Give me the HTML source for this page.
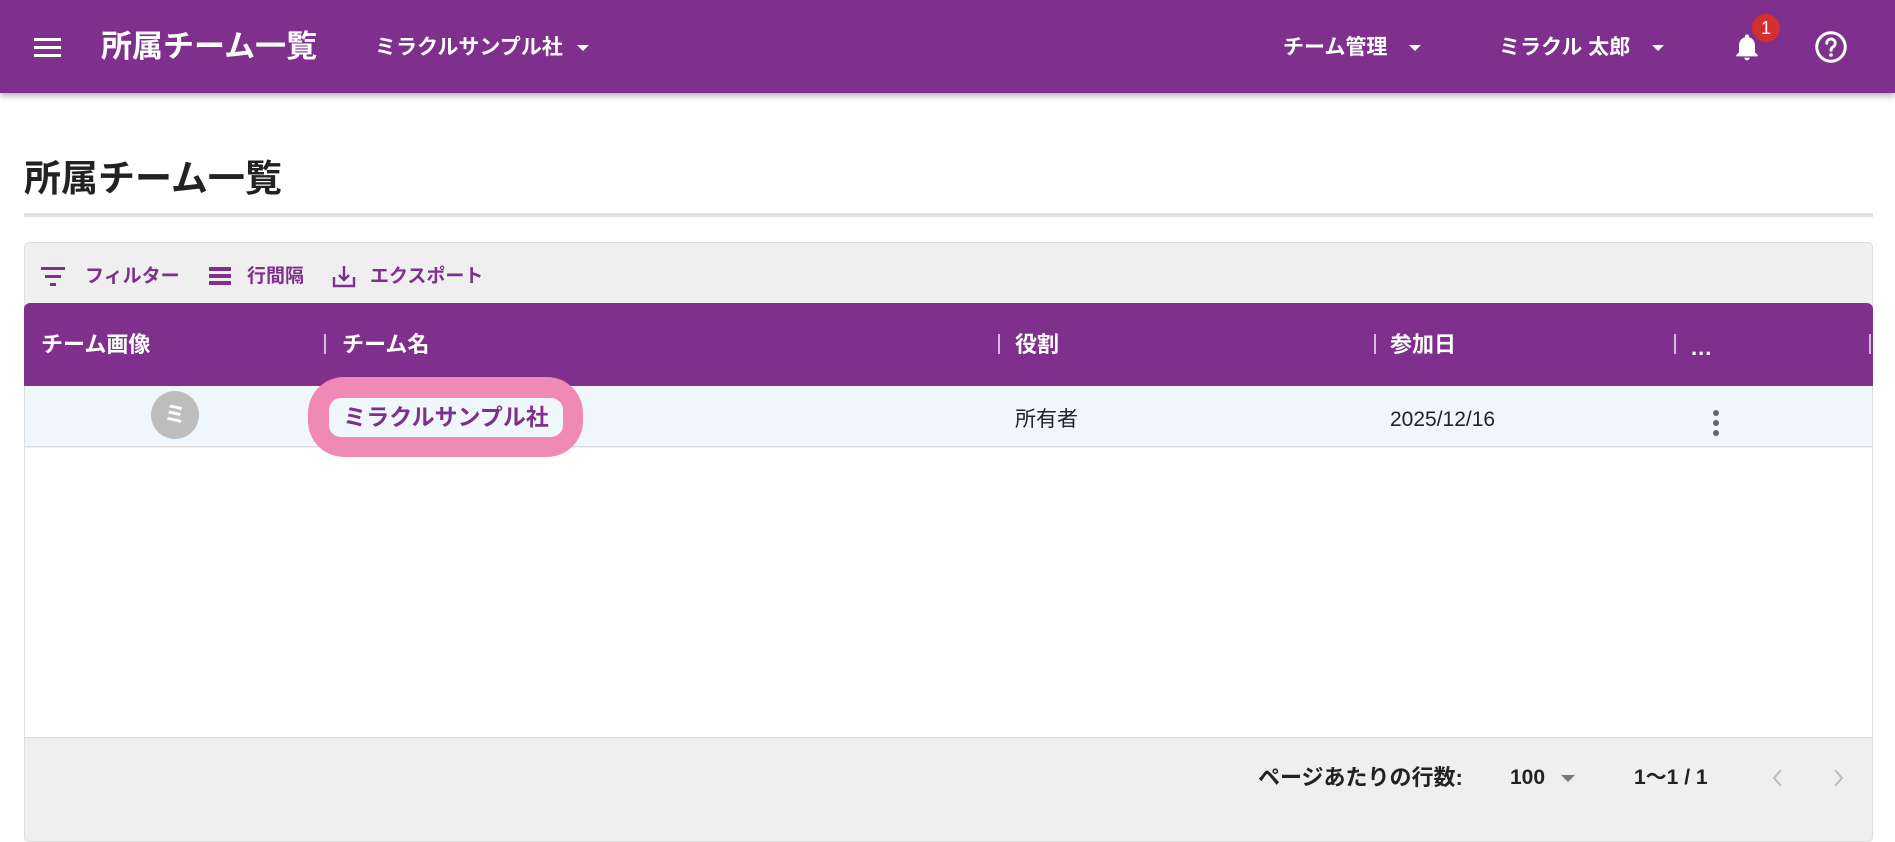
<!DOCTYPE html>
<html><head><meta charset="utf-8"><style>
*{box-sizing:border-box;margin:0;padding:0}
body{width:1895px;height:818px;overflow:hidden;background:#fff;font-family:"Liberation Sans","Noto Sans CJK JP",sans-serif;position:relative}
.abs{position:absolute}
.hdr{left:0;top:0;width:1895px;height:93px;background:#7e308c;box-shadow:0 3px 6px rgba(0,0,0,.3);color:#fff;z-index:2}
.w{color:#fff;font-weight:bold;white-space:nowrap;line-height:1.2}
.tri{display:inline-block;width:0;height:0;border-left:6px solid transparent;border-right:6px solid transparent;border-top:6px solid #fff;vertical-align:middle;margin-left:14px}
.p{color:#7e308c;font-weight:bold;font-size:19px;white-space:nowrap;line-height:24px}
.th{color:#fff;font-weight:bold;font-size:22px;top:332px;white-space:nowrap;line-height:26px}
.sep{top:334px;width:2px;height:20px;background:#d8b8de}
.td{font-size:21px;color:#222;top:407px;white-space:nowrap;line-height:26px}
</style></head><body>
<div class="abs hdr">
  <div class="abs" style="left:34px;top:38px;width:27px;height:3px;background:#fff;box-shadow:0 8px 0 #fff,0 16px 0 #fff"></div>
  <div class="abs w" style="left:101px;top:28px;font-size:31px">所属チーム一覧</div>
  <div class="abs w" style="left:375px;top:35px;font-size:21px">ミラクルサンプル社<span class="tri"></span></div>
  <div class="abs w" style="left:1283px;top:35px;font-size:21px">チーム管理<span class="tri" style="margin-left:22px"></span></div>
  <div class="abs w" style="left:1499px;top:35px;font-size:21px">ミラクル 太郎<span class="tri" style="margin-left:22px"></span></div>
  <svg class="abs" style="left:1731px;top:30px" width="32" height="34" viewBox="0 0 24 24"><path fill="#fff" d="M12 22c1.1 0 2-.9 2-2h-4c0 1.1.9 2 2 2zm6-6v-5c0-3.070-1.64-5.64-4.5-6.32V4c0-.83-.67-1.5-1.5-1.5s-1.5.67-1.5 1.5v.68C7.63 5.36 6 7.920 6 11v5l-2 2v1h16v-1l-2-2z"/></svg>
  <div class="abs" style="left:1752px;top:14px;width:28px;height:28px;border-radius:50%;background:#d32f2f;color:#fff;font-size:18px;text-align:center;line-height:28px">1</div>
  <svg class="abs" style="left:1813px;top:29px" width="36" height="36" viewBox="0 0 24 24"><circle cx="12" cy="12" r="9.5" fill="none" stroke="#fff" stroke-width="2"/><path d="M9.2 9.5a2.8 2.8 0 1 1 4.2 2.4c-.9.6-1.4 1.1-1.4 2.3" fill="none" stroke="#fff" stroke-width="2" stroke-linecap="round"/><circle cx="12" cy="17.3" r="1.2" fill="#fff"/></svg>
</div>
<div class="abs" style="left:24px;top:157px;font-size:37px;font-weight:bold;color:#222;line-height:44px;white-space:nowrap">所属チーム一覧</div>
<div class="abs" style="left:24px;top:213px;width:1849px;height:4px;background:#e0e0e0"></div>
<div class="abs" style="left:24px;top:242px;width:1849px;height:600px;background:#efefef;border:1px solid #ddd;border-radius:5px"></div>
<svg class="abs" style="left:40px;top:265px" width="26" height="22" viewBox="0 0 26 22"><rect x="1" y="2" width="24" height="3" fill="#7e308c"/><rect x="5" y="10" width="16" height="3" fill="#7e308c"/><rect x="10" y="18" width="6" height="3" fill="#7e308c"/></svg>
<div class="abs p" style="left:85px;top:265px">フィルター</div>
<svg class="abs" style="left:209px;top:266px" width="22" height="20" viewBox="0 0 22 20"><rect x="0" y="1" width="22" height="4" fill="#7e308c"/><rect x="0" y="8" width="22" height="4" fill="#7e308c"/><rect x="0" y="15" width="22" height="4" fill="#7e308c"/></svg>
<div class="abs p" style="left:247px;top:265px">行間隔</div>
<svg class="abs" style="left:332px;top:263px" width="24" height="26" viewBox="0 0 24 26"><path d="M2 14v9h20v-9M12 3v14M7 12l5 5 5-5" fill="none" stroke="#7e308c" stroke-width="2.4"/></svg>
<div class="abs p" style="left:370px;top:265px">エクスポート</div>
<div class="abs" style="left:24px;top:303px;width:1849px;height:83px;background:#7e308c;border-radius:6px 6px 0 0"></div>
<div class="abs th" style="left:41px">チーム画像</div>
<div class="abs sep" style="left:324px"></div>
<div class="abs th" style="left:342px">チーム名</div>
<div class="abs sep" style="left:998px"></div>
<div class="abs th" style="left:1015px">役割</div>
<div class="abs sep" style="left:1374px"></div>
<div class="abs th" style="left:1390px">参加日</div>
<div class="abs sep" style="left:1674px"></div>
<div class="abs th" style="left:1691px;top:335px;letter-spacing:1px">...</div>
<div class="abs sep" style="left:1869px"></div>
<div class="abs" style="left:25px;top:386px;width:1847px;height:61px;background:#f0f7fc;border-bottom:1px solid #ddd"></div>
<div class="abs" style="left:25px;top:448px;width:1847px;height:289px;background:#fff"></div>
<div class="abs" style="left:151px;top:391px;width:48px;height:48px;border-radius:50%;background:#bdbdbd;color:#fff;font-size:22px;text-align:center;line-height:48px;font-weight:bold">ミ</div>
<div class="abs" style="left:308px;top:377px;width:275px;height:80px;border-radius:36px;background:#ef8ab5"></div>
<div class="abs" style="left:329px;top:398px;width:234px;height:39px;border-radius:12px;background:#f0f7fc;color:#7e308c;font-weight:bold;font-size:23px;line-height:39px;text-align:center;white-space:nowrap">ミラクルサンプル社</div>
<div class="abs td" style="left:1015px">所有者</div>
<div class="abs td" style="left:1390px">2025/12/16</div>
<div class="abs" style="left:1713px;top:410px;width:6px;height:6px;border-radius:50%;background:#666;box-shadow:0 10px 0 #666,0 20px 0 #666"></div>
<div class="abs" style="left:25px;top:737px;width:1847px;height:1px;background:#ddd"></div>
<div class="abs" style="left:1258px;top:765px;font-size:22px;font-weight:bold;color:#222;white-space:nowrap;line-height:26px">ページあたりの行数:</div>
<div class="abs" style="left:1510px;top:765px;font-size:21px;font-weight:bold;color:#222;line-height:26px">100</div>
<div class="abs" style="left:1561px;top:775px;border-left:7px solid transparent;border-right:7px solid transparent;border-top:7px solid #777"></div>
<div class="abs" style="left:1634px;top:765px;font-size:21px;font-weight:bold;color:#222;white-space:nowrap;line-height:26px">1〜1 / 1</div>
<svg class="abs" style="left:1770px;top:766px" width="16" height="24" viewBox="0 0 16 24"><path d="M11 4l-7 8 7 8" fill="none" stroke="#bbb" stroke-width="2"/></svg>
<svg class="abs" style="left:1830px;top:766px" width="16" height="24" viewBox="0 0 16 24"><path d="M5 4l7 8-7 8" fill="none" stroke="#bbb" stroke-width="2"/></svg>
</body></html>
